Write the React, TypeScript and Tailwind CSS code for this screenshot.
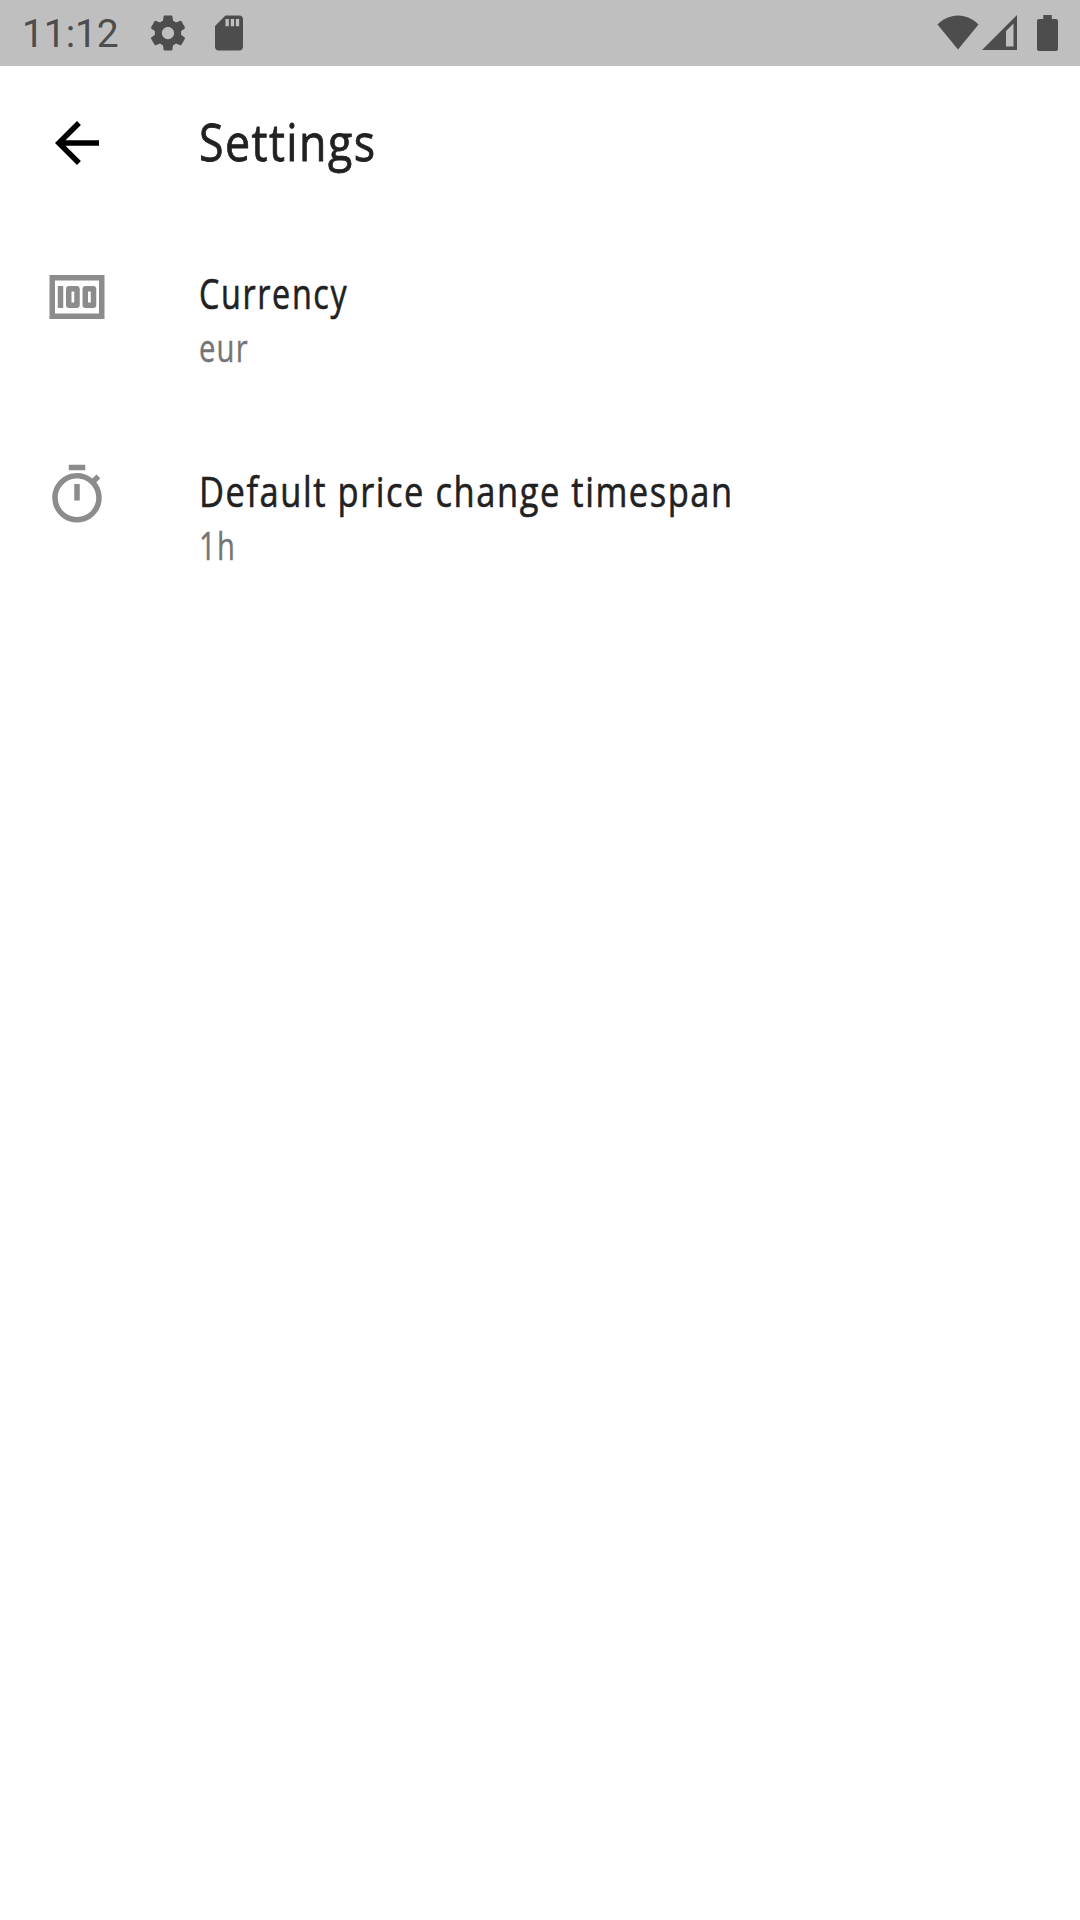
import type { ReactNode } from "react";

const SettingsIcon = () => (
  <svg className="size-[42px]" viewBox="0 0 24 24" fill="currentColor">
    <path d="M19.43 12.98c.04-.32.07-.64.07-.98s-.03-.66-.07-.98l2.11-1.65c.19-.15.24-.42.12-.64l-2-3.46c-.12-.22-.39-.3-.61-.22l-2.49 1c-.52-.4-1.08-.73-1.69-.98l-.38-2.65C14.46 2.18 14.25 2 14 2h-4c-.25 0-.46.18-.49.42l-.38 2.65c-.61.25-1.17.59-1.69.98l-2.49-1c-.23-.09-.49 0-.61.22l-2 3.46c-.13.22-.07.49.12.64l2.11 1.65c-.04.32-.07.65-.07.98s.03.66.07.98l-2.11 1.65c-.19.15-.24.42-.12.64l2 3.46c.12.22.39.3.61.22l2.49-1c.52.4 1.08.73 1.69.98l.38 2.65c.03.24.24.42.49.42h4c.25 0 .46-.18.49-.42l.38-2.65c.61-.25 1.17-.59 1.69-.98l2.49 1c.23.09.49 0 .61-.22l2-3.46c.12-.22.07-.49-.12-.64l-2.11-1.65zM12 15.5c-1.93 0-3.5-1.57-3.5-3.5s1.57-3.5 3.5-3.5 3.5 1.57 3.5 3.5-1.57 3.5-3.5 3.5z" />
  </svg>
);

const SdCardIcon = () => (
  <svg className="size-[42px]" viewBox="0 0 24 24" fill="currentColor">
    <path d="M18 2h-8L4.02 8 4 20c0 1.1.9 2 2 2h12c1.1 0 2-.9 2-2V4c0-1.1-.9-2-2-2z" />
    <path className="text-[#bfbfbf]" d="M10 4h1.9v4.200H10zM13 4h1.900v4.200H13zM15.900 4h1.900v4.200h-1.900z" />
  </svg>
);

const WifiIcon = () => (
  <svg className="h-9 w-[42px]" viewBox="0 0 42 36" fill="currentColor">
    <path d="M0.5 9.5C6 4 13 .5 21 .5s15 3.5 20.5 9L21 34.5z" />
  </svg>
);

const SignalIcon = () => (
  <svg className="h-9 w-[35px]" viewBox="0 0 35 36" fill="currentColor" fillRule="evenodd">
    <path d="M0 35L35 0v35zM24 16v15.500h7.500V8.500z" />
  </svg>
);

const BatteryIcon = () => (
  <svg className="h-9 w-[21px]" viewBox="0 0 21 36" fill="currentColor">
    <path d="M6.300 0h8.500v4H19a2 2 0 0 1 2 2v28a2 2 0 0 1-2 2H2a2 2 0 0 1-2-2V6a2 2 0 0 1 2-2h4.300z" />
  </svg>
);

const BackIcon = () => (
  <svg className="size-[66px]" viewBox="0 0 24 24" fill="currentColor">
    <path d="M20 11H7.830l5.590-5.590L12 4l-8 8 8 8 1.410-1.410L7.830 13H20v-2z" />
  </svg>
);

const MoneyIcon = () => (
  <svg className="size-[66px]" viewBox="0 0 24 24" fill="currentColor" fillRule="evenodd">
    <path d="M2 4v16h20V4zM4 6h16v12H4z" />
    <path d="M5 8h2v8H5z" />
    <path d="M9 16h3c.55 0 1-.45 1-1V9c0-.55-.45-1-1-1H9c-.55 0-1 .45-1 1v6c0 .55.45 1 1 1zm1-6h1v4h-1z" />
    <path d="M15 16h3c.55 0 1-.45 1-1V9c0-.55-.45-1-1-1h-3c-.55 0-1 .45-1 1v6c0 .55.45 1 1 1zm1-6h1v4h-1z" />
  </svg>
);

const TimerIcon = () => (
  <svg className="size-[66px]" viewBox="0 0 24 24" fill="currentColor">
    <path d="M15 1H9v2h6V1zm-4 13h2V8h-2v6zm8.030-6.610l1.420-1.420c-.43-.51-.9-.99-1.410-1.410l-1.420 1.420C16.070 4.740 14.120 4 12 4c-4.970 0-9 4.030-9 9s4.020 9 9 9 9-4.030 9-9c0-2.120-.74-4.070-1.970-5.610zM12 20c-3.870 0-7-3.130-7-7s3.130-7 7-7 7 3.130 7 7-3.130 7-7 7z" />
  </svg>
);

const StatusBar = () => (
  <div className="flex h-[66px] justify-between bg-[#bfbfbf] px-[22px] text-[#4d4d4d]">
    <div className="flex items-center">
      <span className="w-[125px] pt-0.5 font-[Roboto,sans-serif] text-[39px] leading-[66px] tracking-[-0.1px]">
        11:12
      </span>
      <SettingsIcon />
      <span className="ml-[19px] flex">
        <SdCardIcon />
      </span>
    </div>
    <div className="flex pt-[15px]">
      <WifiIcon />
      <span className="ml-[3px] flex">
        <SignalIcon />
      </span>
      <span className="ml-5 flex">
        <BatteryIcon />
      </span>
    </div>
  </div>
);

type PreferenceProps = {
  icon: ReactNode;
  title: string;
  titleClass: string;
  summary: string;
};

const Preference = ({ icon, title, titleClass, summary }: PreferenceProps) => (
  <button className="flex h-[198px] w-full items-start pl-11 pt-11 text-left">
    <span className="w-[155px] shrink-0 text-[#8c8c8c]">{icon}</span>
    <span className="flex flex-col items-start">
      <span
        className={`origin-left whitespace-nowrap text-[42px] leading-[57px] text-[#212121] [-webkit-text-stroke:0.6px] ${titleClass}`}
      >
        {title}
      </span>
      <span className="origin-left scale-x-[0.77] whitespace-nowrap text-[38px] leading-[53px] tracking-[1.5px] text-[#757575] [-webkit-text-stroke:0.4px]">
        {summary}
      </span>
    </span>
  </button>
);

export default function App() {
  return (
    <div className="min-h-[1920px] w-[1080px] bg-white font-['Open_Sans',sans-serif]">
      <StatusBar />
      <header className="flex h-[154px] items-center pl-11">
        <button className="mr-[89px] text-black" aria-label="Back">
          <BackIcon />
        </button>
        <h1 className="origin-left scale-x-[0.86] pb-[5px] text-[52px] leading-[70px] tracking-[1.7px] text-[#212121] [-webkit-text-stroke:0.8px]">
          Settings
        </h1>
      </header>
      <main>
        <Preference
          icon={<MoneyIcon />}
          title="Currency"
          titleClass="scale-x-[0.77] tracking-[2.1px]"
          summary="eur"
        />
        <Preference
          icon={<TimerIcon />}
          title="Default price change timespan"
          titleClass="scale-x-[0.82] tracking-[1.9px]"
          summary="1h"
        />
      </main>
    </div>
  );
}
